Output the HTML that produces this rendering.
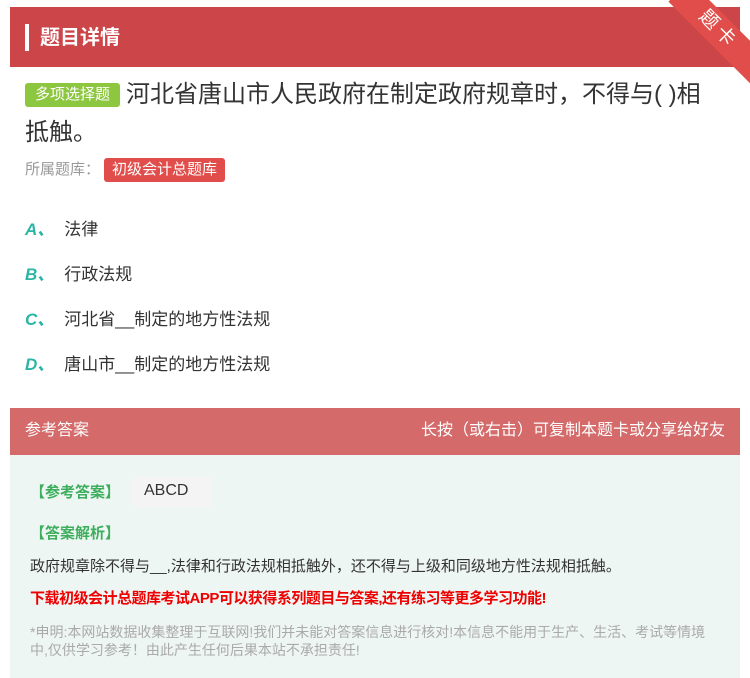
<!DOCTYPE html>
<html><head><meta charset="utf-8"><style>
*{margin:0;padding:0;box-sizing:border-box}
body{width:750px;height:678px;background:#fff;font-family:"Liberation Sans","Noto Sans CJK SC",sans-serif;position:relative;overflow:hidden;color:#333}
.hd{position:absolute;left:10px;top:7px;width:730px;height:60px;background:#cc4549}
.hd .bar{position:absolute;left:15px;top:17px;width:4px;height:27px;background:#fff}
.hd .t{position:absolute;left:30px;top:14px;color:#fff;font-size:20px;font-weight:bold}
.rib{position:absolute;left:660px;top:22px;width:130px;height:30px;background:#e04d4a;transform:rotate(45deg);color:#fff;font-size:19px;text-align:center;line-height:30px;letter-spacing:4px;padding-right:20px}
.q{position:absolute;left:25px;top:76px;width:688px;font-size:24px;line-height:38px;color:#333}
.tag{display:inline-block;background:#8dc63f;color:#fff;font-size:15px;line-height:24px;padding:0 10px;border-radius:3px;vertical-align:3px;margin-right:6px}
.lib{position:absolute;left:25px;top:158px;font-size:15px;color:#999}
.lib span{display:inline-block;background:#e04d4a;color:#fff;padding:0 8px;line-height:24px;border-radius:3px;margin-left:4px}
.op{position:absolute;left:25px;font-size:17px;color:#333}
.op b{color:#2bb5a5;font-style:italic;margin-right:10px}
.ah{position:absolute;left:10px;top:408px;width:730px;height:47px;background:#d46a6a;color:#fff;font-size:16px;line-height:46px;padding:0 15px}
.ah .r{position:absolute;right:15px;top:0}
.ab{position:absolute;left:10px;top:455px;width:730px;height:223px;background:#eef6f4}
.g{color:#3cae5c;font-weight:bold;font-size:15px;position:absolute}
.txt{position:absolute;left:30px;font-size:15px}
</style></head><body>
<div class="hd"><div class="bar"></div><div class="t">题目详情</div></div>
<div class="rib">题卡</div>
<div class="q"><span class="tag">多项选择题</span>河北省唐山市人民政府在制定政府规章时，不得与( )相抵触。</div>
<div class="lib">所属题库：<span>初级会计总题库</span></div>
<div class="op" style="top:215px"><b>A、</b>法律</div>
<div class="op" style="top:260px"><b>B、</b>行政法规</div>
<div class="op" style="top:305px"><b>C、</b>河北省__制定的地方性法规</div>
<div class="op" style="top:350px"><b>D、</b>唐山市__制定的地方性法规</div>
<div class="ah">参考答案<span class="r">长按（或右击）可复制本题卡或分享给好友</span></div>
<div class="ab"></div>
<div class="g" style="left:30px;top:481px">【参考答案】</div>
<div style="position:absolute;left:132px;top:477px;width:80px;height:30px;background:#f4f4f4;font-size:16px;line-height:28px;padding-left:12px;color:#333">ABCD</div>
<div class="g" style="left:30px;top:522px">【答案解析】</div>
<div class="txt" style="top:555px;color:#333">政府规章除不得与__,法律和行政法规相抵触外，还不得与上级和同级地方性法规相抵触。</div>
<div class="txt" style="top:587px;color:#e00;font-weight:bold;letter-spacing:-0.5px">下载初级会计总题库考试APP可以获得系列题目与答案,还有练习等更多学习功能!</div>
<div class="txt" style="top:623px;color:#aaa;font-size:14px;line-height:18px;width:685px">*申明:本网站数据收集整理于互联网!我们并未能对答案信息进行核对!本信息不能用于生产、生活、考试等情境中,仅供学习参考！由此产生任何后果本站不承担责任!</div>
</body></html>
